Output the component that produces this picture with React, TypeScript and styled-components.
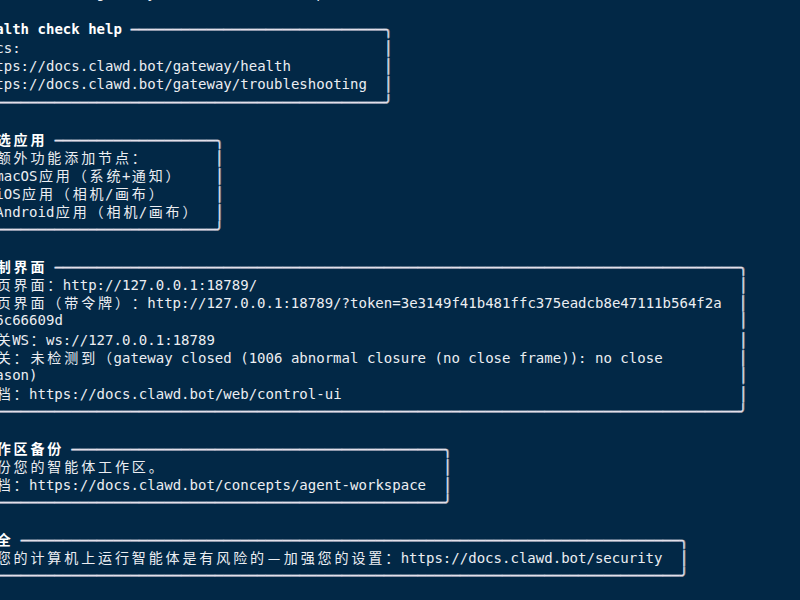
import React from "react";
import styled, { createGlobalStyle } from "styled-components";

const CELL = 8.453;
const ROW = 18.2;

const Global = createGlobalStyle`
  html, body {
    margin: 0;
    padding: 0;
    background: #022846;
  }
`;

const Viewport = styled.div`
  width: 800px;
  height: 600px;
  overflow: hidden;
  background: #022846;
`;

const Screen = styled.div`
  margin: -16px 0 0 -47px;
  font-family: "DejaVu Sans Mono", "Noto Sans CJK SC", monospace;
  font-size: 14.04px;
  color: #eceef2;
`;

const NoteBlock = styled.section`
  display: flex;
  flex-direction: column;
`;

const Row = styled.div`
  height: ${ROW}px;
  line-height: ${ROW}px;
  white-space: pre;
`;

const Rule = styled.span`
  color: #e2e0ea;
  text-shadow: 0 1px 0 rgba(190, 188, 204, 0.75), 1px 0 0 rgba(190, 188, 204, 0.6);
`;

const Title = styled.span`
  font-weight: bold;
  color: #ffffff;
`;

const Wide = styled.span`
  display: inline-block;
  width: ${CELL * 2}px;
  text-align: center;
  font-family: "Noto Sans CJK SC", sans-serif;
`;

const WIDE_RE =
  /[\u1100-\u115F\u2E80-\u303E\u3041-\u33FF\u3400-\u4DBF\u4E00-\u9FFF\uA000-\uA4CF\uAC00-\uD7A3\uF900-\uFAFF\uFE30-\uFE4F\uFF00-\uFF60\uFFE0-\uFFE6\u2014]/;

const isWide = (c: string) => WIDE_RE.test(c);
const cols = (s: string) =>
  Array.from(s).reduce((n, c) => n + (isWide(c) ? 2 : 1), 0);

function Cells({ text }: { text: string }) {
  const parts: React.ReactNode[] = [];
  let run = "";
  Array.from(text).forEach((c, i) => {
    if (isWide(c)) {
      if (run) {
        parts.push(run);
        run = "";
      }
      parts.push(<Wide key={i}>{c}</Wide>);
    } else {
      run += c;
    }
  });
  if (run) parts.push(run);
  return <>{parts}</>;
}

function Note({ title, lines }: { title: string; lines: string[] }) {
  const len = Math.max(cols(title), ...lines.map(cols)) + 2;
  return (
    <NoteBlock>
      <Row>
        <Rule>◇</Rule>
        {"  "}
        <Title>
          <Cells text={title} />
        </Title>{" "}
        <Rule>{"─".repeat(Math.max(len - cols(title) - 1, 1))}╮</Rule>
      </Row>
      {lines.map((l, i) => (
        <Row key={i}>
          <Rule>│</Rule>
          {"  "}
          <Cells text={l} />
          {" ".repeat(len - cols(l))}
          <Rule>│</Rule>
        </Row>
      ))}
      <Row>
        <Rule>{"├" + "─".repeat(len + 2) + "╯"}</Rule>
      </Row>
      <Row>
        <Rule>│</Rule>
      </Row>
    </NoteBlock>
  );
}

const notes: { title: string; lines: string[] }[] = [
  {
    title: "Health check help",
    lines: [
      "Docs:",
      "https://docs.clawd.bot/gateway/health",
      "https://docs.clawd.bot/gateway/troubleshooting",
    ],
  },
  {
    title: "可选应用",
    lines: [
      "为额外功能添加节点：",
      "- macOS应用（系统+通知）",
      "- iOS应用（相机/画布）",
      "- Android应用（相机/画布）",
    ],
  },
  {
    title: "控制界面",
    lines: [
      "网页界面：http://127.0.0.1:18789/",
      "网页界面（带令牌）：http://127.0.0.1:18789/?token=3e3149f41b481ffc375eadcb8e47111b564f2a",
      "e96c66609d",
      "网关WS：ws://127.0.0.1:18789",
      "网关：未检测到（gateway closed (1006 abnormal closure (no close frame)): no close",
      "reason)",
      "文档：https://docs.clawd.bot/web/control-ui",
    ],
  },
  {
    title: "工作区备份",
    lines: [
      "备份您的智能体工作区。",
      "文档：https://docs.clawd.bot/concepts/agent-workspace",
    ],
  },
  {
    title: "安全",
    lines: [
      "在您的计算机上运行智能体是有风险的—加强您的设置：https://docs.clawd.bot/security",
    ],
  },
];

export default function App() {
  return (
    <Viewport>
      <Global />
      <Screen>
        <Row>
          <Rule>│</Rule>
          {"  "}Run "clawdbot gateway --verbose" for output.
        </Row>
        <Row>
          <Rule>│</Rule>
        </Row>
        {notes.map((n, i) => (
          <Note key={i} title={n.title} lines={n.lines} />
        ))}
      </Screen>
    </Viewport>
  );
}
